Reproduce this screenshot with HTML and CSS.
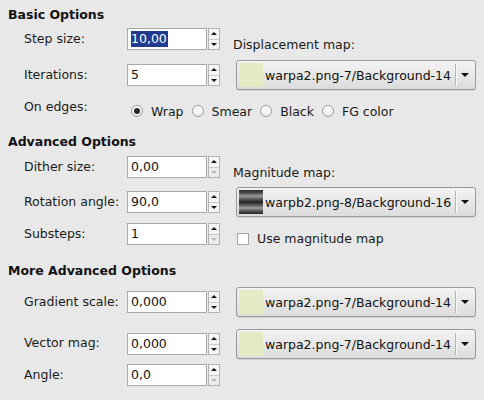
FILE: index.html
```html
<!DOCTYPE html>
<html>
<head>
<meta charset="utf-8">
<link rel="stylesheet" href="styles.css">
</head>
<body>
<div class="panel">
  <h2 class="heading h-first">Basic Options</h2>
  <div class="row r1 gap-a">
    <span class="label">Step size:</span>
    <div class="spin"><div class="entry"><span class="sel">10,00</span></div><div class="arrows"><span class="btn"><i class="up"></i></span><span class="btn"><i class="down"></i></span></div></div>
    <span class="rlabel">Displacement map:</span>
  </div>
  <div class="row r2 gap-b">
    <span class="label">Iterations:</span>
    <div class="spin"><div class="entry">5</div><div class="arrows"><span class="btn"><i class="up"></i></span><span class="btn"><i class="down"></i></span></div></div>
    <div class="combo"><span class="swatch"></span><span class="ctext">warpa2.png-7/Background-14</span><span class="csep"></span><i class="carrow"></i></div>
  </div>
  <div class="row r3 gap-b">
    <span class="label top">On edges:</span>
    <div class="radios">
      <span class="radio"><i class="dot on"></i>Wrap</span>
      <span class="radio"><i class="dot"></i>Smear</span>
      <span class="radio"><i class="dot"></i>Black</span>
      <span class="radio"><i class="dot"></i>FG color</span>
    </div>
  </div>

  <h2 class="heading h-second">Advanced Options</h2>
  <div class="row r1 gap-c">
    <span class="label">Dither size:</span>
    <div class="spin"><div class="entry">0,00</div><div class="arrows"><span class="btn"><i class="up"></i></span><span class="btn off"><i class="down"></i></span></div></div>
    <span class="rlabel">Magnitude map:</span>
  </div>
  <div class="row r2 gap-d">
    <span class="label">Rotation angle:</span>
    <div class="spin"><div class="entry">90,0</div><div class="arrows"><span class="btn"><i class="up"></i></span><span class="btn"><i class="down"></i></span></div></div>
    <div class="combo"><span class="swatch stripes"></span><span class="ctext">warpb2.png-8/Background-16</span><span class="csep"></span><i class="carrow"></i></div>
  </div>
  <div class="row r3 gap-e">
    <span class="label lift">Substeps:</span>
    <div class="spin topspin"><div class="entry">1</div><div class="arrows"><span class="btn"><i class="up"></i></span><span class="btn off"><i class="down"></i></span></div></div>
    <span class="check"><i class="box"></i>Use magnitude map</span>
  </div>

  <h2 class="heading h-third">More Advanced Options</h2>
  <div class="row r2 gap-d">
    <span class="label">Gradient scale:</span>
    <div class="spin"><div class="entry">0,000</div><div class="arrows"><span class="btn"><i class="up"></i></span><span class="btn"><i class="down"></i></span></div></div>
    <div class="combo"><span class="swatch"></span><span class="ctext">warpa2.png-7/Background-14</span><span class="csep"></span><i class="carrow"></i></div>
  </div>
  <div class="row r2 gap-f">
    <span class="label lift">Vector mag:</span>
    <div class="spin"><div class="entry">0,000</div><div class="arrows"><span class="btn"><i class="up"></i></span><span class="btn"><i class="down"></i></span></div></div>
    <div class="combo"><span class="swatch"></span><span class="ctext">warpa2.png-7/Background-14</span><span class="csep"></span><i class="carrow"></i></div>
  </div>
  <div class="row r4 gap-g">
    <span class="label">Angle:</span>
    <div class="spin"><div class="entry">0,0</div><div class="arrows"><span class="btn"><i class="up"></i></span><span class="btn off"><i class="down"></i></span></div></div>
  </div>
</div>
</body>
</html>
```

FILE: styles.css
```css
html, body {
  margin: 0;
  padding: 0;
}
body {
  background: #e8e8e8;
  font-family: "DejaVu Sans", sans-serif;
  font-size: 12.5px;
  color: #1a1a1a;
  width: 484px;
  height: 400px;
  overflow: hidden;
}
.panel {
  padding: 0 8px;
  display: flex;
  flex-direction: column;
}
.heading {
  margin: 0;
  font-size: 12.5px;
  font-weight: bold;
  line-height: 16px;
  color: #111;
}
.h-first { margin-top: 7px; }
.h-second { margin-top: 11px; }
.h-third { margin-top: 16px; }

.row {
  display: grid;
  grid-template-columns: 103px 93px 256px;
  align-items: center;
  padding-left: 16px;
}
.r1 { height: 24px; }
.r2 { height: 30px; }
.r3 { height: 24px; }
.r4 { height: 22px; }
.gap-a { margin-top: 4px; }
.gap-b { margin-top: 9px; }
.gap-c { margin-top: 5px; }
.gap-d { margin-top: 8px; }
.gap-e { margin-top: 6px; }
.gap-f { margin-top: 12px; }
.gap-g { margin-top: 5px; }

.label {
  line-height: 16px;
  white-space: nowrap;
}
.label.top { align-self: start; }
.label.lift { margin-top: -2px; }
.rlabel {
  margin-left: 13px;
  line-height: 16px;
  align-self: end;
  margin-bottom: -2px;
}

.spin {
  display: flex;
  height: 22px;
  width: 93px;
}
.spin.topspin { align-self: start; }
.entry {
  box-sizing: border-box;
  width: 80px;
  height: 22px;
  background: #fff;
  border: 1px solid #a9a9a9;
  padding-left: 3px;
  line-height: 20px;
  color: #111;
}
.sel {
  background: #213b91;
  color: #fff;
  display: inline-block;
  line-height: 16px;
  padding: 0 1px 0 0;
}
.arrows {
  box-sizing: border-box;
  margin-left: 1px;
  width: 12px;
  height: 22px;
  border: 1px solid #b3b3b3;
  background: #f6f6f6;
  display: flex;
  flex-direction: column;
}
.btn {
  flex: 1;
  display: flex;
  align-items: center;
  justify-content: center;
}
.btn + .btn {
  border-top: 1px solid #c9c9c9;
}
.btn.off {
  background: #ececec;
}
.up, .down {
  width: 0;
  height: 0;
  border-left: 3px solid transparent;
  border-right: 3px solid transparent;
}
.up { border-bottom: 3px solid #111; }
.down { border-top: 3px solid #111; }
.btn.off .down { border-top-color: #b8b8b8; }

.combo {
  box-sizing: border-box;
  margin-left: 16px;
  width: 240px;
  height: 30px;
  border: 1px solid #999;
  border-radius: 3px;
  background: linear-gradient(#f3f3f3, #dcdcdc);
  box-shadow: 0 1px 0 #d0d0d0;
  display: flex;
  align-items: center;
  padding-left: 2px;
}
.swatch {
  width: 24px;
  height: 24px;
  background: #e3ebc5;
  flex: none;
}
.swatch.stripes {
  background: linear-gradient(#2a2a2a 0%, #4a4a4a 12%, #9a9a9a 25%, #5a5a5a 38%, #222 50%, #555 62%, #a0a0a0 75%, #505050 88%, #262626 100%);
}
.ctext {
  margin-left: 2px;
  flex: 1;
  white-space: nowrap;
  color: #111;
}
.csep {
  width: 1px;
  height: 22px;
  background: #b5b5b5;
  box-shadow: 1px 0 0 #fafafa;
  margin-right: 5px;
}
.carrow {
  width: 0;
  height: 0;
  border-left: 4px solid transparent;
  border-right: 4px solid transparent;
  border-top: 4px solid #111;
  margin-right: 6px;
}

.radios {
  grid-column: 2 / 4;
  display: flex;
  align-items: center;
  padding-left: 4px;
}
.radio {
  display: flex;
  align-items: center;
  margin-right: 8px;
  white-space: nowrap;
}
.dot {
  box-sizing: border-box;
  width: 12px;
  height: 12px;
  border: 1px solid #9c9c9c;
  border-radius: 50%;
  background: linear-gradient(#fff, #ececec);
  margin-right: 8px;
  display: flex;
  align-items: center;
  justify-content: center;
}
.dot.on::after {
  content: "";
  width: 6px;
  height: 6px;
  border-radius: 50%;
  background: #2b2b2b;
}

.check {
  margin-left: 17px;
  display: flex;
  align-items: center;
  align-self: end;
  line-height: 16px;
}
.box {
  box-sizing: border-box;
  width: 12px;
  height: 12px;
  border: 1px solid #a5a5a5;
  background: #fff;
  margin-right: 8px;
}
```
